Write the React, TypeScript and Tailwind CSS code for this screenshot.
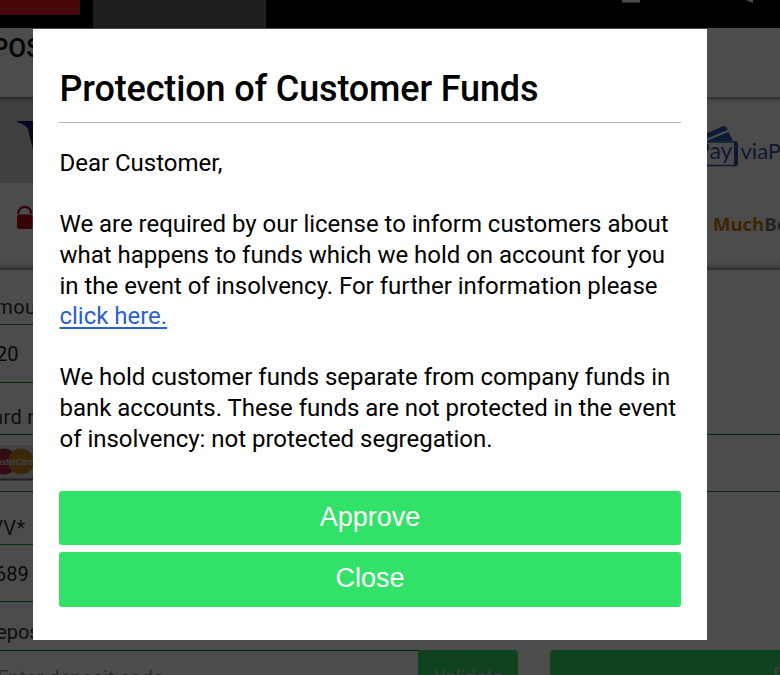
import type { ReactNode } from 'react';

type FieldProps = {
  label: string;
  indent: string;
  className: string;
  inputHeight?: string;
  children: ReactNode;
};

function Field({ label, indent, className, inputHeight = 'h-[58px]', children }: FieldProps) {
  return (
    <div className={className}>
      <div className={`h-[34px] whitespace-nowrap text-xl leading-[34px] tracking-[0.3px] text-[#333] ${indent}`}>{label}</div>
      <div className={`flex items-center border-y border-[#118a2c] text-xl text-[#222] ${inputHeight}`}>{children}</div>
    </div>
  );
}

function MasterCard() {
  return (
    <svg width="60" height="44" viewBox="0 0 60 44" className="-ml-5 shrink-0">
      <rect y="4" width="53" height="34" fill="#dcdcdc" />
      <path d="M0 38.5h53" stroke="#777" strokeWidth="2" />
      <circle cx="24" cy="20.5" r="13" fill="#a52a3c" />
      <circle cx="41" cy="20.5" r="13" fill="#c98324" />
      <text x="32" y="24" textAnchor="middle" fontFamily="Liberation Sans, sans-serif" fontSize="9" fontWeight="700" fontStyle="italic" fill="#ddd" textLength="42" lengthAdjust="spacingAndGlyphs">MasterCard</text>
    </svg>
  );
}

function PaymentMethods() {
  return (
    <section className="flex h-[173px] justify-between overflow-hidden bg-[#fdfdfd] bg-[linear-gradient(#999_0,#eee_4px,#fdfdfd_8px,#fdfdfd_163px,#eee_168px,#999_173px)]">
      <div className="w-[120px]">
        <div className="h-[86px] bg-black/15 pt-6">
          <svg width="80" height="28" viewBox="0 0 80 28" className="ml-[17px]">
            <path d="M0 0h16v28Q13 18 11 8Q8 3 0 1Z" fill="#161b69" />
            <path d="M16 28 30 0h9L26 28Z" fill="#161b69" />
          </svg>
        </div>
        <svg width="18" height="25" viewBox="0 0 18 25" className="ml-4 mt-[22px]">
          <path d="M2 9C3-.5 14.5-.5 15.5 9" fill="none" stroke="#b70718" strokeWidth="2.4" />
          <rect x="1" y="9.5" width="15.5" height="14.5" rx="2.5" fill="#b70718" />
        </svg>
      </div>
      <div className="w-[80px]">
        <svg width="130" height="60" viewBox="0 0 130 60" className="mt-[22px]">
          <path d="M5 15 22 7.500q3-1.500 4.500 1L33 22H5Z" fill="#285d9f" />
          <path d="M5 21.500 29 11.500" stroke="#fff" strokeWidth="2.4" />
          <path d="M5 23h30M5 46.500h30" fill="none" stroke="#285d9f" strokeWidth="1.5" />
          <path d="M34 22.300h1.500q2.500 0 2.500 2.500v20q0 2.500-2.500 2.500H34Z" fill="#285d9f" />
          <text x="-4" y="39.500" fontFamily="Lato, sans-serif" fontSize="23" fill="#285d9f">Pay</text>
          <text x="40.500" y="39.500" fontFamily="Lato, sans-serif" fontSize="22" fill="#285d9f">viaPhone</text>
        </svg>
        <div className="ml-[13px] mt-[33px] font-['Open_Sans',sans-serif] text-[18.5px] font-bold leading-6 text-[#ce7909]">
          Much<span className="text-[#777]">Better</span>
        </div>
      </div>
    </section>
  );
}

function DepositPage() {
  return (
    <div className="h-full overflow-hidden bg-white">
      <header className="flex h-7 justify-between bg-black">
        <div className="flex gap-[13px]">
          <div className="h-[15px] w-20 bg-[#ef1729]" />
          <div className="h-7 w-[173px] bg-[#686868]" />
        </div>
        <svg width="160" height="10" viewBox="0 0 160 10">
          <path d="M2 0h18v2.6H2ZM126 0h7v3Z" fill="#fff" />
        </svg>
      </header>
      <div className="h-[69px] pt-1 text-[26px] font-medium leading-8"><div className="-ml-[40px]">DEPOSIT</div></div>
      <PaymentMethods />
      <form className="flex flex-col pt-5">
        <Field label="Amount*" indent="-ml-[18px]" className="w-[360px]" inputHeight="h-[59px]"><span className="-ml-1">20</span></Field>
        <Field label="Card number*" indent="-ml-[21px]" className="mt-[17px] w-full"><MasterCard /></Field>
        <Field label="CVV*" indent="-ml-[23px] pt-px" className="mt-[18px] w-[360px]"><span className="-ml-[5px] pt-px">689</span></Field>
        <div className="mt-[13px] h-[35px] text-xl leading-[34px] text-[#333]"><div className="-ml-[17px]">Deposit code</div></div>
        <div className="flex h-[56px]">
          <div className="flex w-[418px] shrink-0 items-center whitespace-nowrap border-y border-[#118a2c] text-xl text-[#999]"><span className="-ml-[3px]">Enter deposit code</span></div>
          <button className="w-[100px] shrink-0 rounded-r bg-[#32e268] pb-px text-[19px] text-[#ccc]">Validate</button>
          <button className="ml-8 w-[530px] shrink-0 rounded bg-[#32e268] pb-0 text-[25px] text-[#ccc]">Deposit</button>
        </div>
      </form>
    </div>
  );
}

function FundsDialog() {
  return (
    <div role="dialog" className="absolute left-[33px] top-[29px] h-[611px] w-[674px] bg-white px-[26px] pt-[37px] text-black">
      <h1 className="h-14 whitespace-nowrap pl-[0.5px] text-[36px] font-medium leading-[46px] tracking-[-0.15px]">Protection of Customer Funds</h1>
      <hr className="border-[#b7b7b7]" />
      <div className="mt-[25px] whitespace-nowrap pl-[0.5px] text-[24px] leading-[30.63px] tracking-[-0.02px]">
        <p>Dear Customer,</p>
        <br />
        <p>
          We are required by our license to inform customers about
          <br />
          what happens to funds which we hold on account for you
          <br />
          in the event of insolvency. For further information please
          <br />
          <a href="#" className="text-[#2962ce] underline decoration-2 underline-offset-[3px]">click here.</a>
        </p>
        <br />
        <p>
          We hold customer funds separate from company funds in
          <br />
          bank accounts. These funds are not protected in the event
          <br />
          of insolvency: not protected segregation.
        </p>
      </div>
      <div className="mt-[36.3px] flex flex-col gap-[7px] font-['Liberation_Sans',Arial,sans-serif] text-[27px] text-white">
        <button className="h-[54px] rounded-[3px] bg-[#32e268] pb-px">Approve</button>
        <button className="h-[55px] rounded-[3px] bg-[#32e268] pb-px">Close</button>
      </div>
    </div>
  );
}

export default function App() {
  return (
    <div className="relative h-[675px] w-[780px] overflow-hidden font-['Roboto',sans-serif]">
      <DepositPage />
      <div className="absolute inset-0 bg-black/70" />
      <FundsDialog />
    </div>
  );
}
